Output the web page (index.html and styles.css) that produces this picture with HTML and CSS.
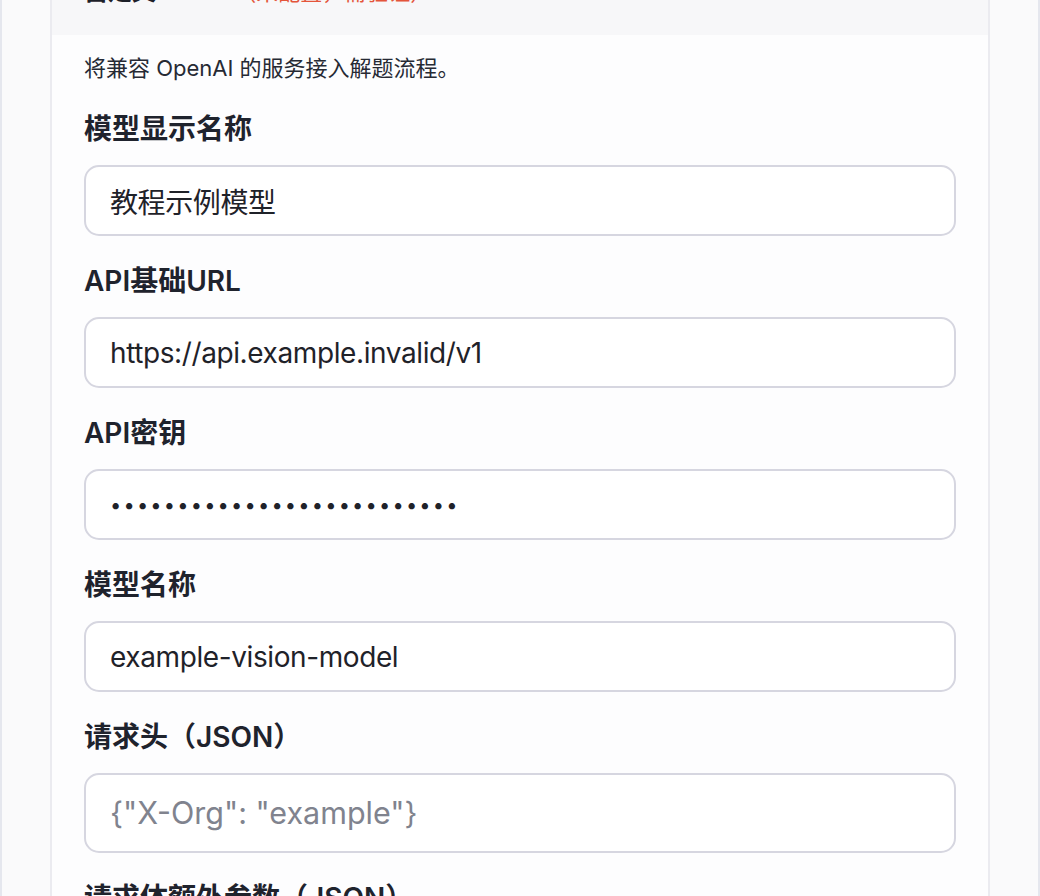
FILE: index.html
```html
<!DOCTYPE html>
<html lang="zh-CN">
<head>
<meta charset="utf-8">
<title>自定义API</title>
<link rel="stylesheet" href="styles.css">
</head>
<body>
<div class="page">
  <section class="card">
    <header class="card-head">
      <h2 class="card-title">自定义API</h2>
      <span class="card-status">（未配置，需验证）</span>
    </header>
    <div class="card-body">
      <p class="desc">将兼容 OpenAI 的服务接入解题流程。</p>
      <div class="field">
        <label class="field-label" for="f-name">模型显示名称</label>
        <input class="field-input" id="f-name" type="text" value="教程示例模型">
      </div>
      <div class="field">
        <label class="field-label" for="f-url">API基础URL</label>
        <input class="field-input" id="f-url" type="text" value="https://api.example.invalid/v1">
      </div>
      <div class="field">
        <label class="field-label" for="f-key">API密钥</label>
        <input class="field-input field-secret" id="f-key" type="password" value="abcdefghijklmnopqrstuvwxyz">
      </div>
      <div class="field">
        <label class="field-label" for="f-model">模型名称</label>
        <input class="field-input" id="f-model" type="text" value="example-vision-model">
      </div>
      <div class="field">
        <label class="field-label" for="f-headers">请求头（JSON）</label>
        <textarea class="field-input field-area" id="f-headers" rows="1" placeholder='{"X-Org": "example"}'></textarea>
      </div>
      <div class="field">
        <label class="field-label" for="f-body">请求体额外参数（JSON）</label>
        <textarea class="field-input field-area" id="f-body" rows="1" placeholder='{"temperature": 0.2}'></textarea>
      </div>
    </div>
  </section>
</div>
</body>
</html>
```

FILE: styles.css
```css
* {
  box-sizing: border-box;
}

html, body {
  margin: 0;
  padding: 0;
  background: #fafafb;
}

body {
  font-family: Inter, "Noto Sans CJK SC", sans-serif;
  color: #1e222c;
}

.page {
  margin-top: -45px;
  padding: 0 48px;
  border-left: 2px solid #e5e7ee;
  border-right: 2px solid #e5e7ee;
  min-height: 1000px;
}

.card {
  border: 2px solid #ebebf0;
  border-top: none;
  background: #fdfdfe;
}

.card-head {
  display: flex;
  align-items: baseline;
  gap: 38px;
  padding: 19px 32px 25px;
  background: #f7f7f9;
}

.card-title {
  margin: 0;
  font-size: 24px;
  line-height: 36px;
  font-weight: 700;
  color: #1d2029;
}

.card-status {
  font-size: 22px;
  line-height: 36px;
  color: #e4553b;
}

.card-body {
  padding: 17px 32px 40px;
}

.desc {
  margin: 0 0 27px;
  font-size: 22px;
  line-height: 32px;
  color: #262a34;
}

.field {
  display: flex;
  flex-direction: column;
  gap: 18px;
  margin-bottom: 27px;
}

.field-label {
  font-size: 28px;
  line-height: 36px;
  font-weight: 600;
  color: #1f232d;
}

.field-input {
  display: block;
  width: 100%;
  height: 71px;
  margin: 0;
  padding: 0 24px;
  border: 2px solid #d6d6e0;
  border-radius: 15px;
  background: #ffffff;
  font-family: Inter, "Noto Sans CJK SC", sans-serif;
  font-size: 28px;
  letter-spacing: -0.4px;
  color: #1f2229;
  outline: none;
}

.field-secret {
  font-size: 20px;
  letter-spacing: 2.2px;
}

.field-area {
  height: 80px;
  padding: 15px 24px;
  font-size: 30.5px;
  letter-spacing: 0;
  line-height: 1.5;
  resize: none;
  overflow: hidden;
}

.field-area::placeholder {
  color: #80838e;
}
```
